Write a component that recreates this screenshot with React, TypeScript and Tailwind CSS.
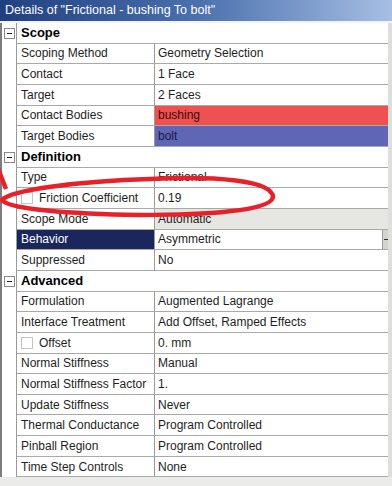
import React from 'react';

type Row =
  | { kind: 'header'; label: string }
  | {
      kind: 'prop';
      name: string;
      value: string;
      check?: boolean;
      valueBg?: string;
      nameBg?: string;
      dropdown?: boolean;
    };

const rows: Row[] = [
  { kind: 'header', label: 'Scope' },
  { kind: 'prop', name: 'Scoping Method', value: 'Geometry Selection' },
  { kind: 'prop', name: 'Contact', value: '1 Face' },
  { kind: 'prop', name: 'Target', value: '2 Faces' },
  { kind: 'prop', name: 'Contact Bodies', value: 'bushing', valueBg: 'bg-[#ef5050] text-[#3a0e0e]' },
  { kind: 'prop', name: 'Target Bodies', value: 'bolt', valueBg: 'bg-[#5f66b4] text-[#141a4a]' },
  { kind: 'header', label: 'Definition' },
  { kind: 'prop', name: 'Type', value: 'Frictional' },
  { kind: 'prop', name: 'Friction Coefficient', value: '0.19', check: true },
  { kind: 'prop', name: 'Scope Mode', value: 'Automatic', valueBg: 'bg-[#e6e6e3]' },
  { kind: 'prop', name: 'Behavior', value: 'Asymmetric', nameBg: 'bg-[#1b275c] text-white', dropdown: true },
  { kind: 'prop', name: 'Suppressed', value: 'No' },
  { kind: 'header', label: 'Advanced' },
  { kind: 'prop', name: 'Formulation', value: 'Augmented Lagrange' },
  { kind: 'prop', name: 'Interface Treatment', value: 'Add Offset, Ramped Effects' },
  { kind: 'prop', name: 'Offset', value: '0. mm', check: true },
  { kind: 'prop', name: 'Normal Stiffness', value: 'Manual' },
  { kind: 'prop', name: 'Normal Stiffness Factor', value: '1.' },
  { kind: 'prop', name: 'Update Stiffness', value: 'Never' },
  { kind: 'prop', name: 'Thermal Conductance', value: 'Program Controlled' },
  { kind: 'prop', name: 'Pinball Region', value: 'Program Controlled' },
  { kind: 'prop', name: 'Time Step Controls', value: 'None' },
];

function MinusBox() {
  return (
    <div className="w-[11px] h-[11px] border border-[#8a8a8a] bg-white flex items-center justify-center">
      <div className="w-[5px] h-px bg-[#222]" />
    </div>
  );
}

function CheckBox() {
  return <div className="w-[12px] h-[12px] border border-[#c4c4c4] bg-white mr-[6px] shrink-0" />;
}

export default function App() {
  return (
    <div className="relative w-[392px] h-[486px] overflow-hidden bg-[#ebebea] font-['Liberation_Sans',Arial,sans-serif] text-[12px] text-[#1e1e1e]">
      {/* title bar */}
      <div className="h-[21px] bg-gradient-to-r from-[#213f7f] via-[#4a70ad] to-[#a7bfe4] text-white text-[12.5px] leading-[21px] pl-[5px] whitespace-nowrap">
        Details of "Frictional - bushing To bolt"
      </div>
      <div className="h-[2px] bg-[#f4f4f4]" />

      <div className="flex">
        <div className="flex-1 border-l-2 border-[#7d7d7d] bg-white">
          {rows.map((row, i) => (
            <div key={i} className="flex h-[20.67px]">
              <div className="w-[15px] shrink-0 border-r border-[#9a9a9a] flex items-center justify-center">
                {row.kind === 'header' && <MinusBox />}
              </div>
              {row.kind === 'header' ? (
                <div className="flex-1 border-b border-[#a9a9a9] pl-[4px] flex items-center font-bold text-[13px] text-black">
                  {row.label}
                </div>
              ) : (
                <div className="flex-1 flex border-b border-[#a9a9a9]">
                  <div className={`w-[138px] shrink-0 border-r border-[#9a9a9a] pl-[4px] flex items-center whitespace-nowrap ${row.nameBg ?? ''}`}>
                    {row.check && <CheckBox />}
                    {row.name}
                  </div>
                  <div className={`flex-1 pl-[3px] flex items-center whitespace-nowrap ${row.valueBg ?? ''}`}>
                    <span className="flex-1">{row.value}</span>
                    {row.dropdown && (
                      <div className="w-[6px] h-full bg-[#d6d3cc] border-l border-[#9c9c9c] flex items-center justify-center">
                        <div className="w-[4px] h-px bg-[#333]" />
                      </div>
                    )}
                  </div>
                </div>
              )}
            </div>
          ))}
        </div>
        <div className="w-[4px] bg-[#dededd]" />
      </div>

      {/* red annotation */}
      <svg className="absolute inset-0 pointer-events-none" width="392" height="486" viewBox="0 0 392 486">
        <path
          d="M 2 200 C 10 190 80 181 150 179 C 215 176 272 180 273 197 C 271 211 205 215 140 215 C 70 214 8 209 2 200 Z"
          fill="none"
          stroke="#e8202a"
          strokeWidth="4.5"
        />
        <path d="M -3 166 L 6 189" stroke="#e8202a" strokeWidth="4.5" fill="none" />
      </svg>
    </div>
  );
}
